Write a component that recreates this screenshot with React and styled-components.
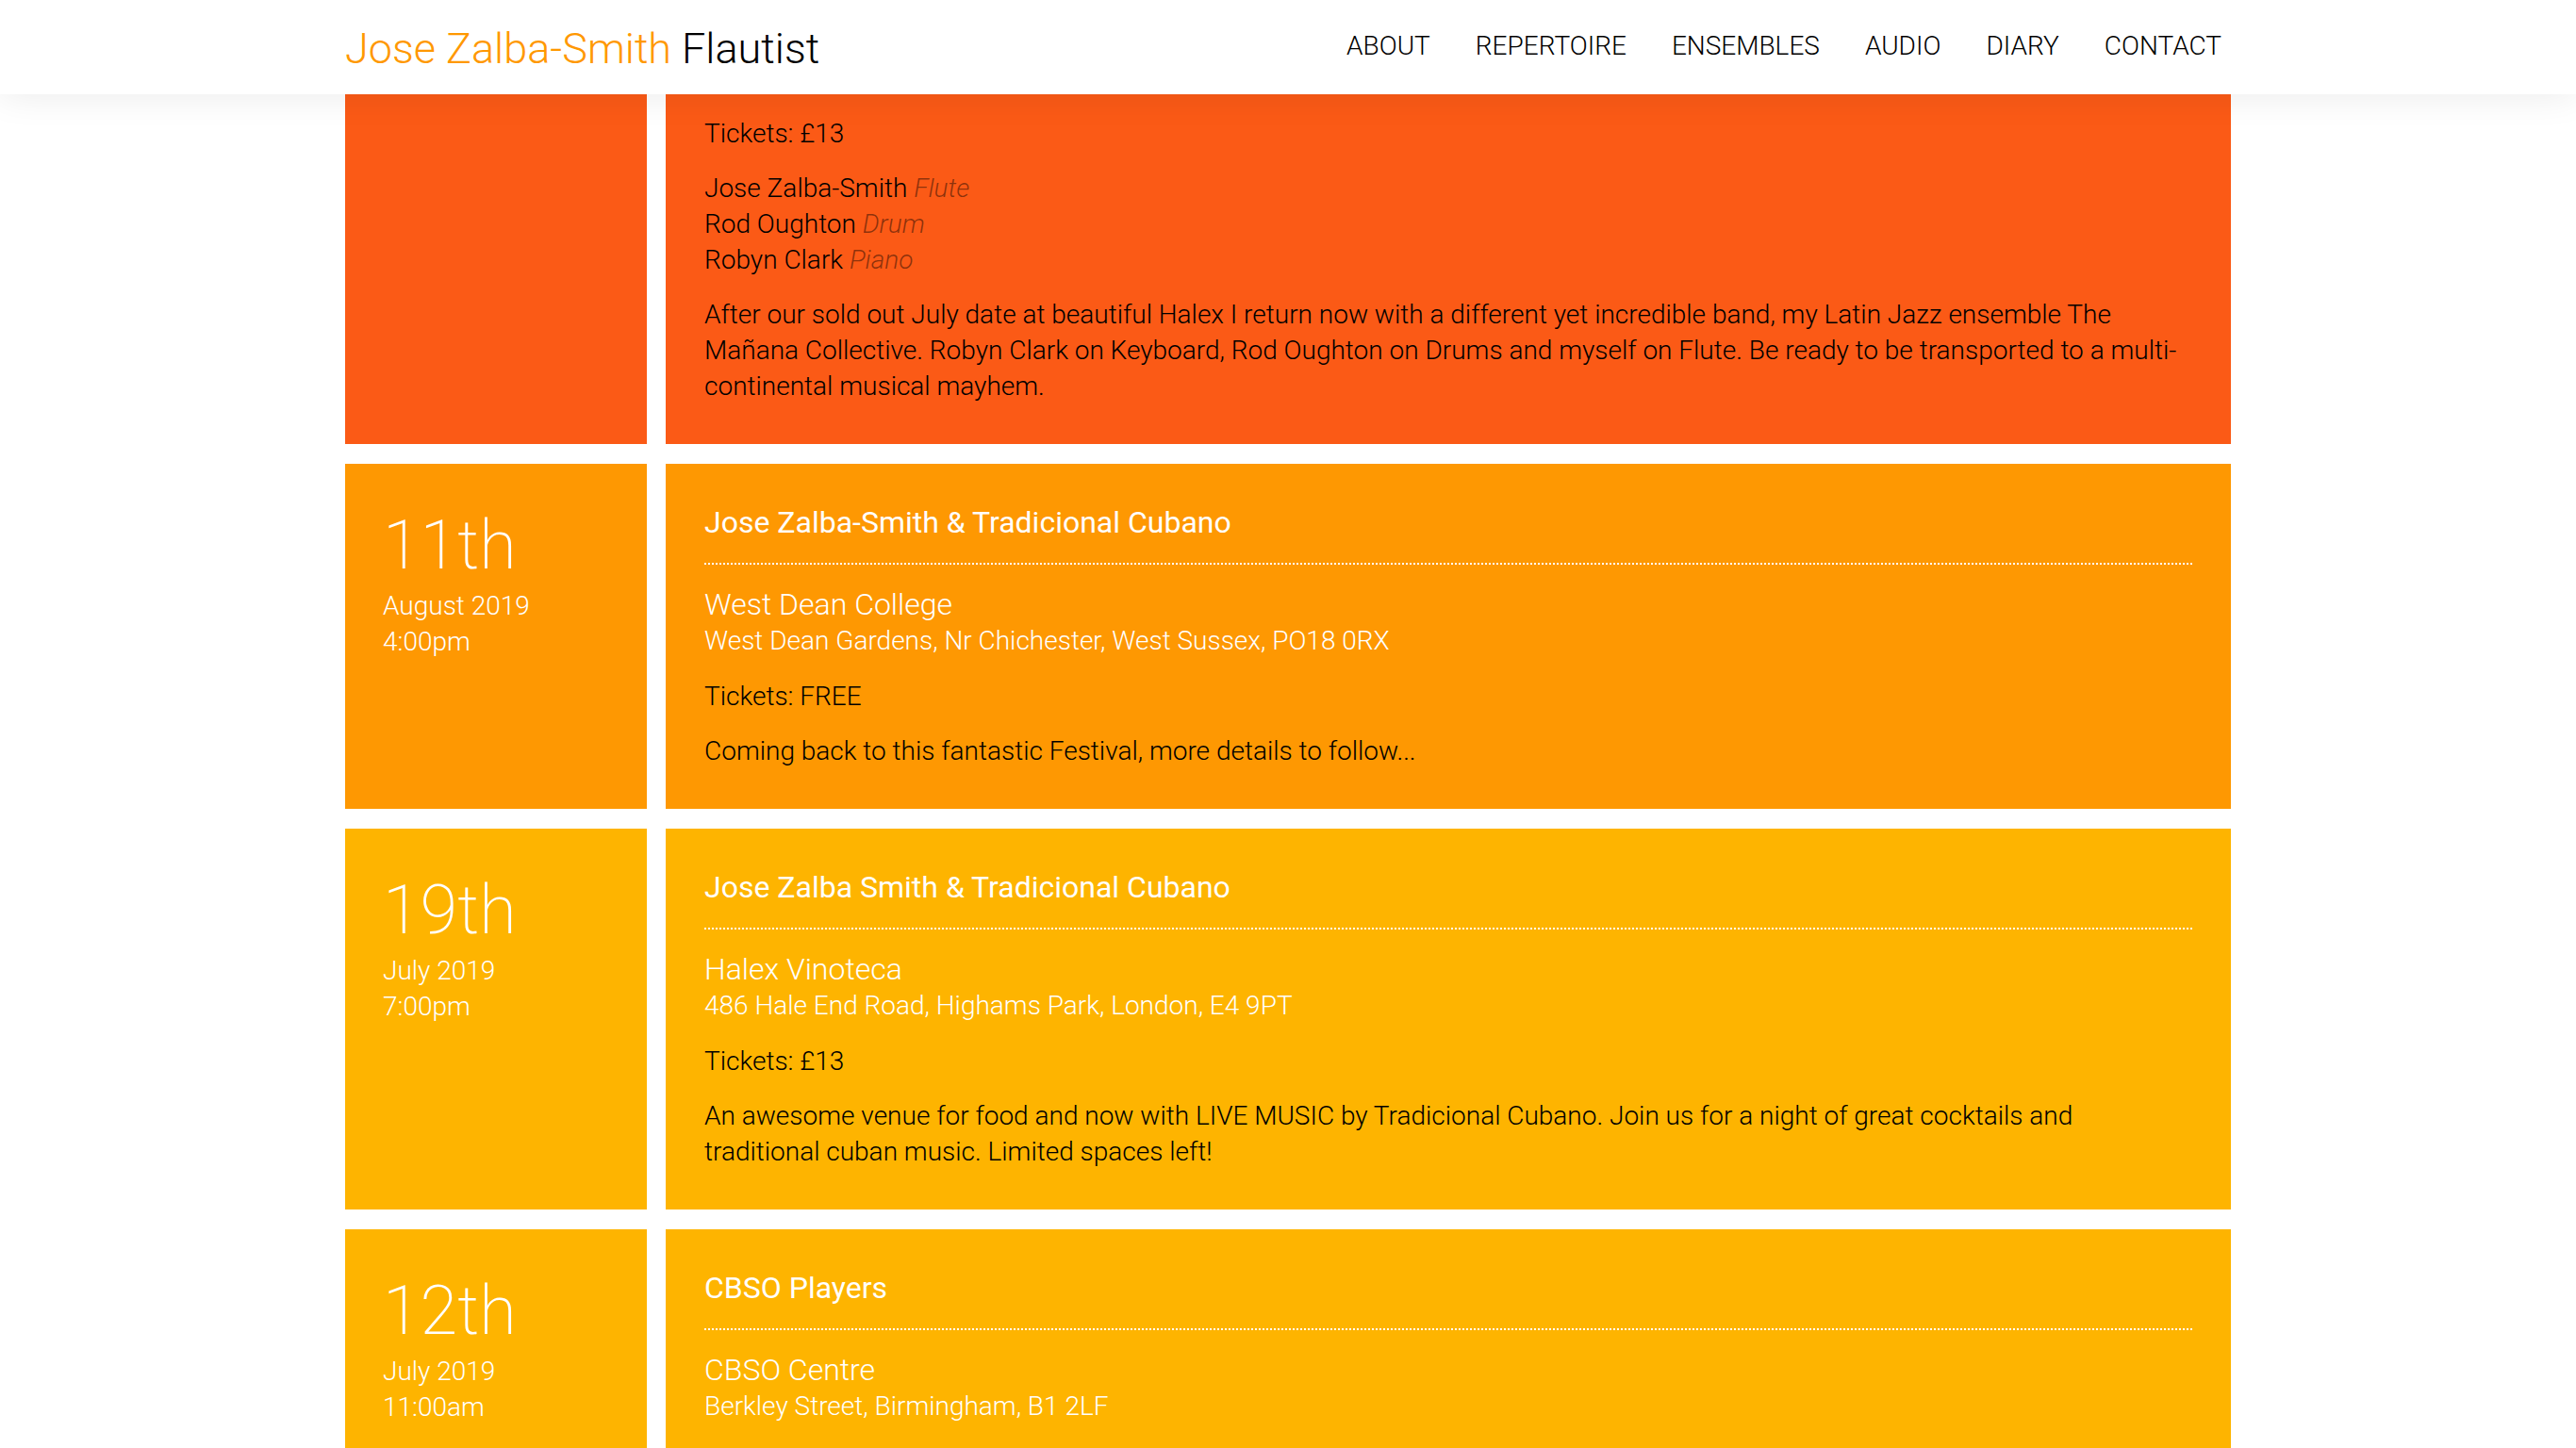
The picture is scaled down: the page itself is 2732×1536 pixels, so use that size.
import { useLayoutEffect, useRef } from 'react'
import styled, { createGlobalStyle } from 'styled-components'

const gigs = [
  {
    id: 1,
    day: '6th',
    month: 'September 2019',
    time: '7:30pm',
    colour: '#fb5a16',
    title: 'The Mañana Collective',
    venue: 'Halex Vinoteca',
    address: '486 Hale End Road, Highams Park, London, E4 9PT',
    tickets: '£13',
    players: [
      ['Jose Zalba-Smith', 'Flute'],
      ['Rod Oughton', 'Drum'],
      ['Robyn Clark', 'Piano'],
    ],
    text: 'After our sold out July date at beautiful Halex I return now with a different yet incredible band, my Latin Jazz ensemble The Mañana Collective. Robyn Clark on Keyboard, Rod Oughton on Drums and myself on Flute. Be ready to be transported to a multi-continental musical mayhem.',
  },
  {
    id: 2,
    day: '11th',
    month: 'August 2019',
    time: '4:00pm',
    colour: '#fe9802',
    title: 'Jose Zalba-Smith & Tradicional Cubano',
    venue: 'West Dean College',
    address: 'West Dean Gardens, Nr Chichester, West Sussex, PO18 0RX',
    tickets: 'FREE',
    text: 'Coming back to this fantastic Festival, more details to follow...',
  },
  {
    id: 3,
    day: '19th',
    month: 'July 2019',
    time: '7:00pm',
    colour: '#feb400',
    title: 'Jose Zalba Smith & Tradicional Cubano',
    venue: 'Halex Vinoteca',
    address: '486 Hale End Road, Highams Park, London, E4 9PT',
    tickets: '£13',
    text: 'An awesome venue for food and now with LIVE MUSIC by Tradicional Cubano. Join us for a night of great cocktails and traditional cuban music. Limited spaces left!',
  },
  {
    id: 4,
    day: '12th',
    month: 'July 2019',
    time: '11:00am',
    colour: '#feb400',
    title: 'CBSO Players',
    venue: 'CBSO Centre',
    address: 'Berkley Street, Birmingham, B1 2LF',
    tickets: '£8',
    text: 'A lunchtime concert of chamber music with friends from the City of Birmingham Symphony Orchestra.',
  },
]

const nav = ['ABOUT', 'REPERTOIRE', 'ENSEMBLES', 'AUDIO', 'DIARY', 'CONTACT']

const App = () => {
  const scrollRef = useRef(null)

  // page is shown scrolled down into the diary
  useLayoutEffect(() => {
    if (scrollRef.current) scrollRef.current.scrollTop = 225
  }, [])

  return (
    <Page>
      <GlobalStyle />
      <Header>
        <HeaderInner>
          <Logo>
            <span>Jose Zalba-Smith</span> Flautist
          </Logo>
          <Nav>
            {nav.map((item) => (
              <NavLink key={item} href="#">{item}</NavLink>
            ))}
          </Nav>
        </HeaderInner>
      </Header>
      <Scroller ref={scrollRef}>
        <Diary>
          {gigs.map((g) => (
            <Gig key={g.id}>
              <DateBox $colour={g.colour}>
                <Day>{g.day}</Day>
                <Small>{g.month}</Small>
                <Small>{g.time}</Small>
              </DateBox>
              <Details $colour={g.colour}>
                <Title>{g.title}</Title>
                <Venue>{g.venue}</Venue>
                <Address>{g.address}</Address>
                <Para>Tickets: {g.tickets}</Para>
                {g.players && (
                  <Para>
                    {g.players.map(([name, inst]) => (
                      <Player key={name}>
                        {name} <em>{inst}</em>
                      </Player>
                    ))}
                  </Para>
                )}
                <Para>{g.text}</Para>
              </Details>
            </Gig>
          ))}
        </Diary>
      </Scroller>
    </Page>
  )
}

const GlobalStyle = createGlobalStyle`
  html, body {
    margin: 0;
    padding: 0;
    background: #fff;
    font-family: Roboto, "Liberation Sans", sans-serif;
    font-weight: 300;
    overflow: hidden;
  }
  * { box-sizing: border-box; }
`

const Page = styled.div`
  display: flex;
  flex-direction: column;
  height: 100vh;
`

const Header = styled.header`
  position: relative;
  z-index: 2;
  flex: none;
  height: 100px;
  background: #fff;
  box-shadow: 0 0 40px rgba(0, 0, 0, 0.09);
`

const HeaderInner = styled.div`
  width: 2000px;
  height: 100%;
  margin: 0 auto;
  display: flex;
  align-items: center;
  justify-content: space-between;
`

const Logo = styled.div`
  font-size: 45px;
  font-weight: 300;
  color: #000;
  padding-top: 2px;
  span {
    color: #ff9800;
  }
`

const Nav = styled.nav`
  display: flex;
  gap: 48px;
  padding-right: 10px;
  margin-top: -4px;
`

const NavLink = styled.a`
  font-size: 28px;
  font-weight: 300;
  color: #000;
  text-decoration: none;
`

const Scroller = styled.div`
  flex: 1;
  overflow: hidden;
`

const Diary = styled.div`
  width: 2000px;
  margin: 0 auto;
  padding: 20px 0 40px;
  display: flex;
  flex-direction: column;
  gap: 21px;
`

const Gig = styled.div`
  display: grid;
  grid-template-columns: 320px 1fr;
  gap: 20px;
`

const DateBox = styled.div`
  background: ${(p) => p.$colour};
  color: #fff;
  padding: 42px 40px 40px;
`

const Day = styled.div`
  font-size: 72px;
  font-weight: 200;
  line-height: 90px;
`

const Small = styled.div`
  font-size: 28px;
  line-height: 38px;
`

const Details = styled.div`
  background: ${(p) => p.$colour};
  padding: 41px 41px 22px;
`

const Title = styled.h3`
  margin: 0 0 22px;
  padding-bottom: 22px;
  font-size: 32px;
  font-weight: 400;
  line-height: 42px;
  color: #fff;
  border-bottom: 2px dotted #fff;
`

const Venue = styled.div`
  font-size: 32px;
  line-height: 40px;
  color: #fff;
`

const Address = styled.div`
  font-size: 28px;
  line-height: 38px;
  color: #fff;
  margin-bottom: 21px;
`

const Para = styled.div`
  font-size: 28px;
  line-height: 38px;
  color: #000;
  margin-bottom: 20px;
`

const Player = styled.div`
  em {
    color: rgba(0, 0, 0, 0.45);
    font-style: italic;
  }
`

export default App
